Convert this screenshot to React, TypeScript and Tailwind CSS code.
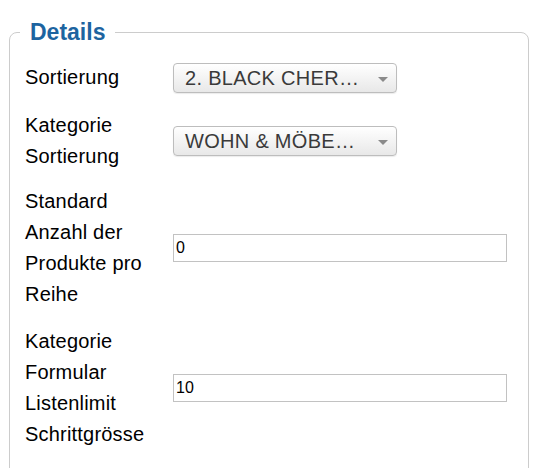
import React from 'react';

const Select = ({ value }: { value: string }) => (
  <div className="relative flex h-[30px] w-[224px] items-center rounded-[4px] border border-[#bdbdbd] bg-gradient-to-b from-white to-[#e8e8e8] pl-[11px] text-[20px] tracking-[0.3px] text-[#3a3a3a] shadow-[0_1px_1px_rgba(0,0,0,0.08)]">
    <span className="whitespace-nowrap">{value}</span>
    <span className="absolute right-[8px] top-[13px] h-0 w-0 border-x-[5px] border-t-[5px] border-x-transparent border-t-[#8a8a8a]" />
  </div>
);

const TextInput = ({ value }: { value: string }) => (
  <input
    readOnly
    value={value}
    className="h-[28px] w-[334px] border border-[#c2c2c2] bg-white pl-[2px] text-[16px] text-black outline-none"
  />
);

export default function App() {
  const rows = [
    { label: 'Sortierung', control: <Select value="2. BLACK CHER…" />, gap: 'mb-[17px]' },
    { label: 'Kategorie Sortierung', control: <Select value="WOHN & MÖBE…" />, gap: 'mb-[14px]' },
    { label: 'Standard Anzahl der Produkte pro Reihe', control: <TextInput value="0" />, gap: 'mb-[16px]' },
    { label: 'Kategorie Formular Listenlimit Schrittgrösse', control: <TextInput value="10" />, gap: '' },
  ];

  return (
    <div className="min-h-screen bg-white pt-[19px] font-['Liberation_Sans',Arial,sans-serif]">
      <fieldset className="ml-[9px] w-[520px] rounded-[8px] border border-[#cccccc] pl-[15px] pb-10 pt-[17px]">
        <legend className="-ml-[5px] px-[10px] text-[23px] font-bold leading-[26px] text-[#1d64a0]">
          Details
        </legend>
        {rows.map((row, i) => (
          <div key={i} className={`flex items-center ${row.gap}`}>
            <div className="w-[148px] shrink-0 pr-[13px] text-[20px] leading-[31px] tracking-[0.2px] text-black">
              {row.label}
            </div>
            {row.control}
          </div>
        ))}
      </fieldset>
    </div>
  );
}
